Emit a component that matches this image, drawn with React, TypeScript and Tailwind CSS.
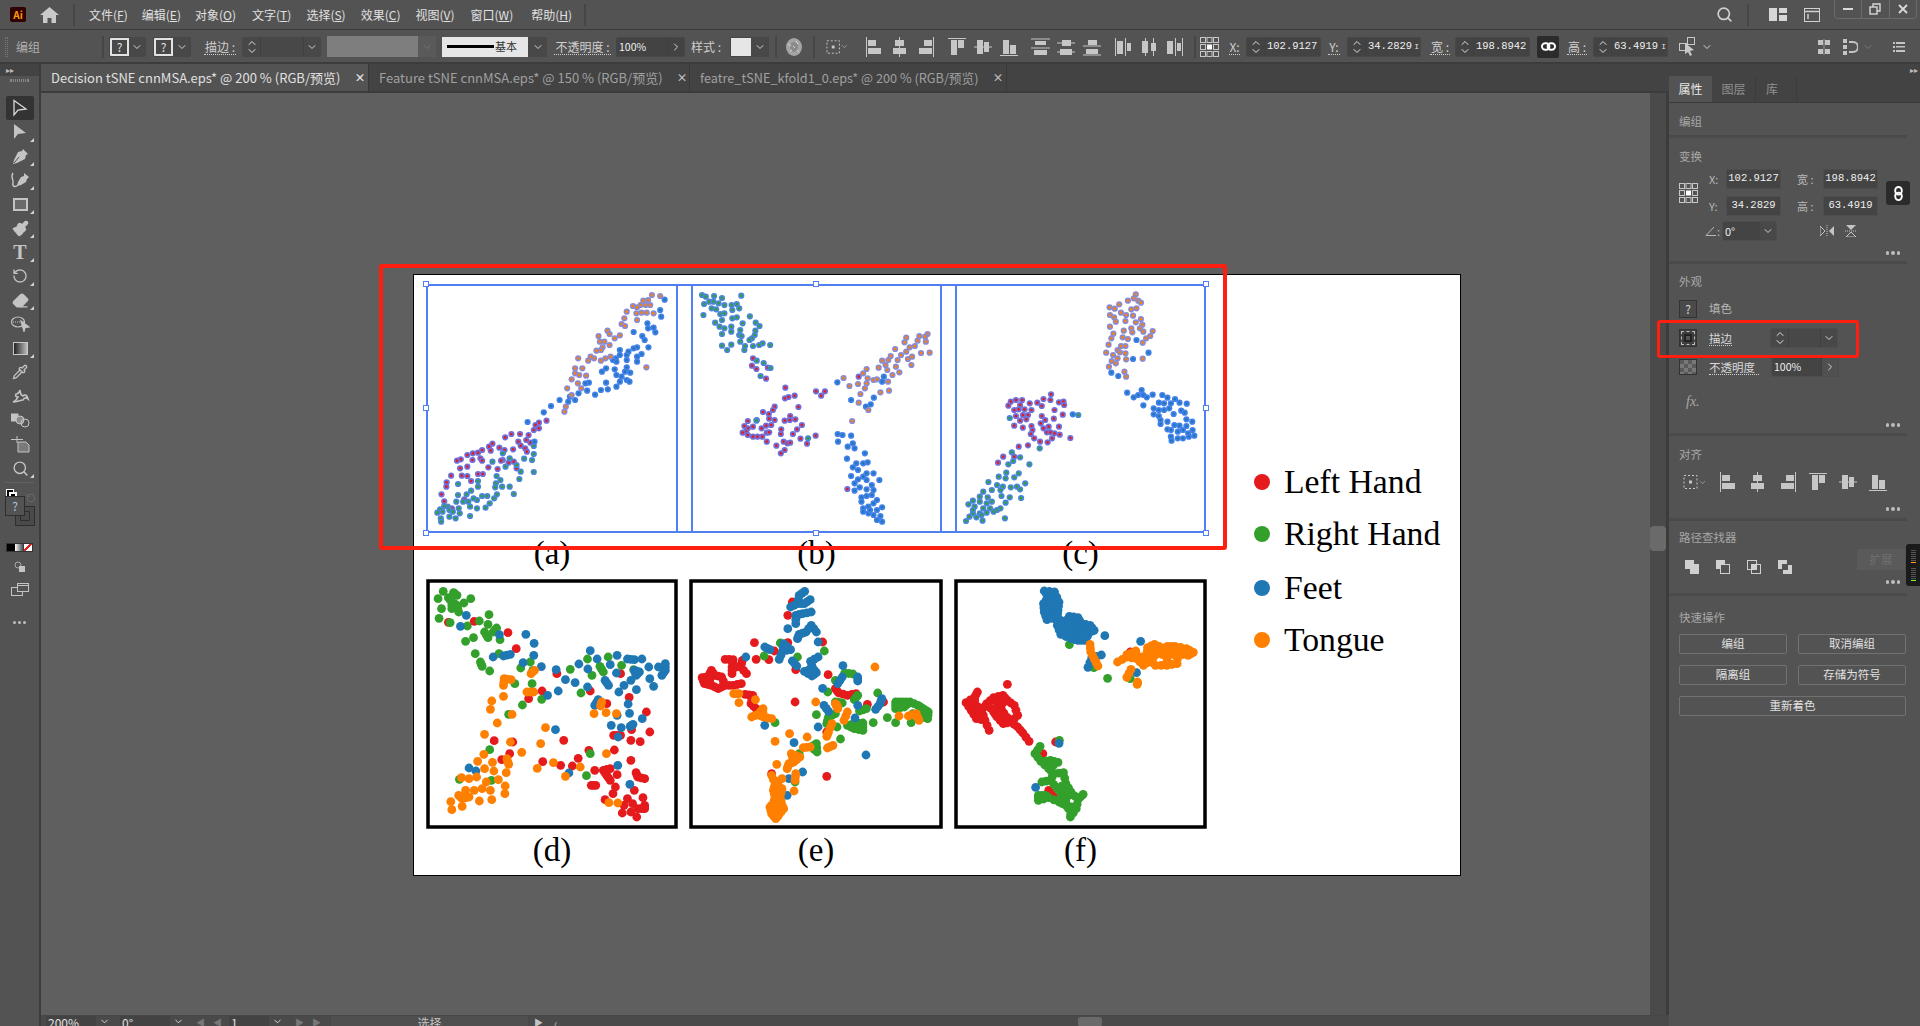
import { ChevronDown, ChevronUp, ChevronRight, Search, Paintbrush, Pipette, Eraser, RotateCcw } from "lucide-react";
import type { ReactNode } from "react";

type Pt = [number, number];
type Series = { color: string; ring: string; pts: Pt[] };

const RED = "#e41a1c";
const GREEN = "#33a02c";
const BLUE = "#1f77b4";
const ORANGE = "#ff7f00";

// the dense blobs of the lower plots: fill in between close neighbours
function densify(series: Series[], maxDist: number): Series[] {
  return series.map((s) => {
    const out: Pt[] = [...s.pts];
    s.pts.forEach((a, i) => {
      s.pts.slice(i + 1).forEach((b) => {
        if (Math.hypot(a[0] - b[0], a[1] - b[1]) < maxDist) out.push([(a[0] + b[0]) / 2, (a[1] + b[1]) / 2]);
      });
    });
    return { ...s, pts: out };
  });
}

const plotA: Series[] = [
  { color: RED, ring: "#7070d8", pts: [[427,482],[405,488],[395,495],[405,505],[390,510],[375,525],[350,522],[325,522],[307,532],[345,545],[368,540],[380,548],[352,557],[365,565],[370,575],[330,568],[305,570],[290,563],[270,551],[260,560],[265,572],[240,570],[228,578],[213,580],[197,585],[212,600],[235,595],[240,602],[178,598],[167,602],[300,600],[295,602],[317,608],[340,625],[285,627],[258,622],[197,620],[176,625],[228,642],[242,642],[181,647],[150,647],[197,648],[208,663],[137,667],[136,680],[122,703],[130,724],[188,718],[152,745],[332,605]] },
  { color: GREEN, ring: "#4a86d8", pts: [[390,558],[390,582],[385,600],[362,596],[390,636],[352,635],[348,657],[340,615],[320,595],[308,620],[300,580],[270,605],[282,648],[293,660],[280,670],[228,663],[228,680],[170,672],[278,682],[298,680],[320,680],[332,702],[283,703],[275,715],[255,708],[240,708],[225,720],[208,692],[195,703],[170,705],[165,725],[185,725],[205,740],[225,745],[250,743],[262,730],[172,745],[140,740],[130,738],[118,748],[110,758],[125,755],[145,750],[155,755],[175,760],[205,768],[163,775],[145,770],[120,775],[121,785],[200,725],[215,715]] },
  { color: BLUE, ring: "#4280ea", pts: [[770,119],[757,150],[760,170],[720,190],[738,203],[722,205],[743,217],[680,216],[705,228],[712,240],[690,262],[680,265],[665,275],[640,270],[723,262],[703,282],[690,290],[660,285],[640,285],[628,295],[620,300],[660,300],[630,305],[690,305],[600,325],[588,335],[625,328],[660,322],[655,335],[630,345],[670,338],[645,350],[660,360],[640,365],[600,368],[550,368],[540,370],[668,365],[630,380],[605,388],[585,390],[545,392],[520,400],[495,410],[510,420],[490,425],[568,404],[465,420],[440,438],[419,457],[372,486],[392,545]] },
  { color: ORANGE, ring: "#8b8bd0", pts: [[733,105],[757,108],[722,120],[708,122],[700,135],[678,138],[690,142],[715,135],[728,135],[703,158],[718,158],[688,160],[660,155],[653,175],[645,192],[655,198],[690,180],[738,160],[604,212],[610,222],[578,228],[582,245],[595,245],[625,235],[640,226],[610,255],[590,262],[572,272],[585,270],[613,290],[598,295],[585,302],[565,295],[555,290],[548,302],[519,295],[531,325],[510,325],[510,340],[522,345],[542,347],[500,358],[518,370],[487,385],[528,385],[500,405],[483,440],[479,455],[717,322]] },
];

const plotB: Series[] = [
  { color: RED, ring: "#7070d8", pts: [[1025,295],[1022,317],[1035,327],[1068,323],[1063,356],[1119,383],[1118,415],[1128,411],[1146,407],[1208,394],[1223,407],[1234,394],[1157,441],[1088,440],[1083,450],[1054,456],[1071,462],[1072,476],[1088,480],[1010,483],[1036,480],[1063,497],[1078,495],[1133,468],[1117,482],[1132,480],[1148,478],[1167,495],[1107,508],[1153,508],[1141,522],[1106,522],[1010,505],[1025,500],[1000,498],[1005,515],[1050,505],[1065,518],[1072,517],[995,518],[1010,525],[1025,530],[1038,530],[1052,530],[1065,545],[1114,545],[1125,550],[1093,557],[1133,548],[1163,536],[1182,551],[1207,527],[1117,570],[1106,580],[1299,687],[1332,350]] },
  { color: GREEN, ring: "#4a86d8", pts: [[877,105],[888,110],[912,108],[935,114],[991,107],[883,132],[898,125],[910,125],[925,130],[942,135],[963,135],[978,132],[905,145],[918,148],[985,145],[965,150],[881,165],[930,162],[942,160],[935,180],[965,175],[978,172],[915,188],[928,200],[942,205],[962,200],[995,190],[1016,169],[1033,188],[1044,198],[1032,212],[988,210],[962,215],[935,222],[985,225],[992,228],[1030,225],[1022,235],[1015,240],[988,245],[962,254],[935,257],[1053,250],[1043,255],[1075,255],[1025,258],[1000,270],[950,270],[1036,302],[1056,309],[1076,324],[1047,348],[1002,258],[1185,535],[1035,482]] },
  { color: BLUE, ring: "#4280ea", pts: [[1270,367],[1405,350],[1400,365],[1320,565],[1310,420],[1376,413],[1367,433],[1353,440],[1271,522],[1285,525],[1310,527],[1272,545],[1300,560],[1315,550],[1350,580],[1298,596],[1345,610],[1358,607],[1325,610],[1315,622],[1375,640],[1330,630],[1355,640],[1310,648],[1345,650],[1330,658],[1355,660],[1392,660],[1320,670],[1370,675],[1375,690],[1335,682],[1320,692],[1355,688],[1340,712],[1370,705],[1355,708],[1340,725],[1385,720],[1375,730],[1345,745],[1360,740],[1400,742],[1385,750],[1345,755],[1360,760],[1375,765],[1395,768],[1385,780],[1400,785],[1365,750]] },
  { color: ORANGE, ring: "#8b8bd0", pts: [[1532,222],[1508,228],[1470,233],[1525,230],[1503,242],[1465,247],[1495,258],[1480,262],[1438,267],[1538,278],[1513,279],[1487,290],[1470,275],[1455,285],[1475,297],[1445,300],[1425,288],[1418,300],[1400,302],[1410,315],[1390,323],[1440,320],[1485,315],[1450,337],[1430,345],[1415,330],[1355,327],[1345,340],[1358,355],[1375,360],[1385,358],[1288,354],[1305,378],[1330,372],[1355,370],[1350,385],[1337,402],[1395,397],[1332,428],[1360,450],[1313,483],[1420,392],[1417,365],[1527,245]] },
];

const plotC: Series[] = [
  { color: RED, ring: "#7070d8", pts: [[352,403],[330,417],[350,420],[312,428],[290,430],[375,427],[388,425],[250,420],[235,425],[268,420],[228,437],[262,435],[325,438],[390,435],[245,450],[258,448],[275,448],[295,450],[362,450],[270,465],[285,465],[250,468],[325,468],[386,464],[262,482],[280,478],[335,480],[360,476],[322,490],[245,497],[270,503],[295,498],[298,510],[375,500],[330,505],[340,517],[350,517],[362,520],[293,522],[377,524],[303,535],[355,535],[342,547],[320,545],[408,534],[285,556],[258,560],[213,590],[245,590],[198,608],[345,500]] },
  { color: GREEN, ring: "#4a86d8", pts: [[431,465],[232,474],[319,565],[238,577],[262,592],[242,603],[228,613],[289,613],[222,638],[258,640],[245,652],[220,655],[200,650],[170,666],[277,670],[253,680],[262,688],[235,682],[212,680],[195,675],[180,690],[205,690],[155,695],[145,710],[168,712],[208,708],[232,712],[265,714],[125,722],[145,725],[165,730],[180,725],[220,728],[112,733],[130,740],[155,745],[175,745],[195,750],[205,745],[125,760],[145,760],[165,758],[185,755],[115,770],[135,772],[150,765],[105,783],[153,782],[218,775],[125,750]] },
  { color: BLUE, ring: "#4280ea", pts: [[600,240],[635,278],[590,297],[527,338],[547,348],[573,398],[615,390],[592,412],[620,405],[605,405],[647,404],[630,412],[675,405],[690,413],[712,417],[725,428],[746,431],[620,436],[665,428],[680,430],[700,430],[650,445],[665,450],[680,450],[695,445],[730,452],[740,458],[650,463],[665,468],[708,462],[670,480],[690,485],[762,485],[745,498],[710,495],[725,497],[690,508],[670,492],[700,510],[720,515],[735,510],[763,510],[750,520],[768,527],[752,530],[700,530],[720,535],[735,535],[702,542],[415,463],[745,478]] },
  { color: ORANGE, ring: "#8b8bd0", pts: [[598,103],[592,115],[575,122],[605,122],[613,128],[550,133],[522,142],[537,146],[600,145],[585,148],[555,158],[523,165],[570,165],[590,167],[535,172],[613,177],[598,187],[617,194],[568,183],[540,185],[585,205],[523,200],[610,205],[647,213],[620,215],[588,217],[563,212],[533,221],[640,228],[628,235],[527,235],[575,237],[560,232],[618,248],[519,254],[555,258],[568,258],[545,270],[552,277],[512,278],[568,280],[532,285],[545,295],[570,298],[520,320],[540,310],[618,296],[565,335],[570,350],[528,303]] },
];

const plotD: Series[] = densify([
  { color: RED, ring: RED, pts: [[140,186],[215,183],[313,217],[337,265],[455,340],[640,340],[412,392],[552,392],[373,415],[665,411],[600,430],[715,455],[672,508],[725,515],[620,525],[640,525],[670,540],[697,544],[327,545],[273,541],[475,540],[318,580],[295,598],[548,570],[622,569],[517,594],[670,600],[414,604],[466,615],[500,617],[565,630],[590,630],[610,625],[600,645],[630,643],[610,660],[685,637],[710,655],[690,650],[555,675],[568,675],[625,680],[680,690],[618,700],[595,718],[660,715],[705,712],[650,735],[675,730],[710,735],[690,745],[645,758],[670,755],[687,770],[710,745]] },
  { color: GREEN, ring: GREEN, pts: [[125,93],[155,97],[110,115],[140,112],[165,105],[205,115],[185,128],[150,125],[165,135],[120,145],[150,145],[170,155],[113,174],[145,187],[195,197],[258,163],[230,182],[255,192],[280,203],[245,215],[270,215],[255,232],[290,238],[190,243],[213,232],[218,280],[287,280],[233,305],[238,318],[260,332],[378,305],[350,323],[385,330],[333,370],[383,370],[411,417],[355,434],[315,462],[525,398],[494,327],[544,296],[604,290],[580,318],[590,335],[643,315],[557,345],[678,328],[260,568],[552,580],[172,657],[265,660],[541,646]] },
  { color: BLUE, ring: BLUE, pts: [[192,165],[175,198],[288,223],[365,222],[389,249],[388,285],[270,290],[300,287],[320,282],[357,307],[410,319],[453,328],[480,358],[508,367],[459,392],[428,405],[544,380],[519,311],[552,271],[572,296],[610,313],[630,285],[545,326],[628,338],[660,296],[680,298],[702,296],[722,320],[680,330],[695,335],[750,320],[770,310],[770,330],[760,345],[725,355],[736,378],[685,345],[670,360],[650,375],[635,395],[686,388],[595,360],[605,375],[575,418],[565,435],[662,431],[630,465],[666,459],[703,475],[676,492],[613,495],[642,502],[668,498],[633,530],[451,508],[200,623],[220,632],[490,638],[632,615],[667,672]] },
  { color: ORANGE, ring: ORANGE, pts: [[302,355],[322,358],[300,375],[390,330],[380,340],[368,395],[388,395],[300,408],[266,422],[262,447],[325,462],[585,425],[582,437],[563,460],[598,457],[628,460],[282,488],[245,522],[422,502],[320,545],[408,550],[353,576],[243,582],[225,603],[268,606],[310,595],[315,612],[245,625],[272,632],[308,637],[445,607],[398,624],[523,620],[480,648],[599,580],[178,652],[200,655],[222,650],[285,658],[305,677],[250,665],[262,690],[238,685],[190,690],[215,690],[170,705],[200,710],[230,722],[266,718],[304,700],[147,724],[180,738],[150,748],[606,727],[632,728],[180,715]] },
], 21);

const plotE: Series[] = densify([
  { color: RED, ring: RED, pts: [[1140,125],[1127,165],[1228,245],[1030,247],[1127,247],[1088,272],[1035,297],[1072,298],[905,330],[878,352],[895,350],[915,345],[935,350],[968,298],[945,297],[995,300],[965,320],[1007,340],[990,320],[965,340],[885,370],[905,375],[925,385],[945,375],[968,375],[992,370],[1003,402],[1025,405],[1020,430],[1035,445],[1148,425],[1150,328],[1244,343],[1240,648],[1300,405],[1265,385],[1275,398],[1325,400],[1358,432],[1405,425],[1240,515],[1080,640]] },
  { color: GREEN, ring: GREEN, pts: [[1105,248],[1155,290],[1058,287],[1233,272],[1292,338],[1316,341],[1265,360],[1243,395],[1330,405],[1320,418],[1388,398],[1265,425],[1285,428],[1355,445],[1335,452],[1265,460],[1210,463],[1245,470],[1240,490],[1270,500],[1300,495],[1325,490],[1345,488],[1345,510],[1320,505],[1375,487],[1090,487],[1280,536],[1210,550],[1195,560],[1212,575],[1160,580],[1148,665],[1440,425],[1460,425],[1482,425],[1505,435],[1520,445],[1535,455],[1440,445],[1465,440],[1490,460],[1533,475],[1416,472],[1440,487],[1485,487],[1515,468]] },
  { color: BLUE, ring: BLUE, pts: [[1176,93],[1160,105],[1192,118],[1135,140],[1155,130],[1175,130],[1195,155],[1150,165],[1170,160],[1127,205],[1150,190],[1195,195],[1210,215],[1160,222],[1180,215],[1155,235],[1215,245],[1115,250],[1112,272],[1135,268],[1060,260],[1075,268],[1005,290],[1102,297],[1140,302],[1153,317],[1215,290],[1193,303],[1200,325],[1175,333],[1210,337],[1197,347],[1287,316],[1285,350],[1330,350],[1330,362],[1272,370],[1228,384],[1232,435],[1245,453],[1330,435],[1400,415],[1395,430],[1382,447],[1322,473],[1215,500],[1145,547],[1354,584],[1170,635],[1130,655],[1125,705],[1060,495]] },
  { color: ORANGE, ring: ORANGE, pts: [[1380,320],[970,400],[985,400],[985,427],[1033,418],[1055,445],[1040,462],[1022,470],[1055,470],[1080,475],[1208,425],[1265,430],[1272,445],[1300,455],[1255,490],[1290,480],[1245,515],[1240,528],[1132,520],[1183,530],[1090,543],[1172,562],[1192,560],[1242,563],[1258,555],[1137,580],[1162,590],[1130,610],[1095,612],[1145,605],[1125,625],[1150,640],[1148,660],[1080,645],[1110,655],[1090,670],[1085,690],[1110,685],[1145,692],[1090,710],[1105,710],[1085,730],[1110,735],[1075,740],[1095,750],[1115,745],[1080,760],[1100,765],[1092,775],[1450,467],[1477,467],[1500,460],[1508,480],[1270,435],[1100,725]] },
], 27);

const plotF: Series[] = densify([
  { color: RED, ring: RED, pts: [[582,275],[225,372],[138,395],[130,410],[185,412],[212,405],[105,427],[130,430],[165,430],[200,435],[225,420],[245,435],[120,450],[150,450],[185,455],[215,458],[255,465],[135,475],[160,480],[195,470],[172,510],[213,490],[235,485],[255,500],[270,518],[288,543],[365,545],[328,580],[345,690],[360,710],[150,465]] },
  { color: GREEN, ring: GREEN, pts: [[405,253],[476,322],[516,354],[582,355],[376,540],[320,558],[305,580],[322,603],[350,600],[372,606],[345,625],[388,637],[360,640],[350,660],[395,670],[325,665],[370,685],[395,690],[410,695],[445,702],[315,705],[345,712],[315,720],[375,725],[395,715],[430,718],[425,745],[410,755],[408,770],[385,700],[335,705],[395,735]] },
  { color: BLUE, ring: BLUE, pts: [[332,92],[362,95],[345,110],[375,125],[330,130],[350,130],[332,155],[355,150],[372,150],[340,178],[370,170],[405,168],[430,172],[370,195],[390,190],[420,190],[440,190],[465,195],[477,210],[380,222],[400,215],[420,210],[445,210],[465,215],[410,235],[430,240],[450,240],[440,225],[508,226],[612,243],[498,284],[470,292],[459,321],[600,337],[358,120],[375,549],[307,681]] },
  { color: ORANGE, ring: ORANGE, pts: [[465,252],[467,275],[478,297],[488,317],[545,305],[572,283],[598,272],[572,290],[632,262],[652,252],[690,258],[712,258],[745,265],[765,276],[600,295],[630,285],[660,280],[690,285],[720,280],[750,285],[620,315],[655,315],[688,315],[718,310],[584,327],[572,351],[603,365],[602,372],[640,300],[680,265]] },
], 34);

const SCALE_X = 2.904;
const SCALE_Y = 3;

function Scatter({ series, x0, y0, w, h, selected }: { series: Series[]; x0: number; y0: number; w: number; h: number; selected?: boolean }) {
  return (
    <svg width={w} height={h} className="block overflow-visible">
      {selected ? (
        <rect x="1" y="1" width={w - 2} height={h - 2} fill="none" stroke="#4f7ff0" strokeWidth="2" />
      ) : (
        <rect x="2" y="2" width={w - 4} height={h - 4} fill="none" stroke="#000" strokeWidth="3.5" />
      )}
      {series.map((s) =>
        s.pts.map(([px, py], i) => {
          const cx = (px - x0) / SCALE_X;
          const cy = (py - y0) / SCALE_Y;
          return selected ? (
            <g key={s.color + i}>
              <circle cx={cx} cy={cy} r="3.1" fill={s.ring} />
              <circle cx={cx} cy={cy} r="1.3" fill={s.color} />
            </g>
          ) : (
            <circle key={s.color + i} cx={cx} cy={cy} r="4.4" fill={s.color} />
          );
        }),
      )}
    </svg>
  );
}

function Chevron({ className = "" }: { className?: string }) {
  return <ChevronDown size={12} strokeWidth={2} className={"text-[#d4d4d4] " + className} />;
}

function AlignGlyph({ kind, className = "" }: { kind: string; className?: string }) {
  const c = "#c6c6c6";
  const shapes: Record<string, ReactNode> = {
    hl: <><path d="M.5 0v20" stroke={c} /><rect x="2" y="3" width="8" height="6" fill={c} /><rect x="2" y="11" width="13" height="6" fill={c} /></>,
    hc: <><path d="M6.500 0v20" stroke={c} /><rect x="2" y="3" width="9" height="6" fill={c} /><rect x="0" y="11" width="13" height="6" fill={c} /></>,
    hr: <><path d="M14.500 0v20" stroke={c} /><rect x="5" y="3" width="8" height="6" fill={c} /><rect x="0" y="11" width="13" height="6" fill={c} /></>,
    vt: <><path d="M0 1.500h18" stroke={c} /><rect x="3" y="3" width="6" height="15" fill={c} /><rect x="10" y="3" width="6" height="8" fill={c} /></>,
    vc: <><path d="M0 10h18" stroke={c} /><rect x="3" y="3" width="6" height="14" fill={c} /><rect x="10" y="5" width="5" height="10" fill={c} /></>,
    vb: <><path d="M0 18.500h18" stroke={c} /><rect x="3" y="3" width="6" height="14" fill={c} /><rect x="10" y="8" width="6" height="9" fill={c} /></>,
    dt: <><path d="M0 2h19M0 11h19" stroke={c} /><rect x="4" y="4" width="11" height="4" fill={c} /><rect x="3" y="13" width="13" height="5" fill={c} /></>,
    dm: <><path d="M0 6h18M0 15h18" stroke={c} /><rect x="5" y="3" width="9" height="6" fill={c} /><rect x="3" y="12" width="12" height="6" fill={c} /></>,
    db: <><path d="M0 9h18M0 18h18" stroke={c} /><rect x="5" y="3" width="9" height="5" fill={c} /><rect x="3" y="12" width="12" height="5" fill={c} /></>,
    sl: <><path d="M.5 1v18M10.500 1v18" stroke={c} /><rect x="2" y="4" width="6" height="13" fill={c} /><rect x="12" y="6" width="4" height="8" fill={c} /></>,
    sc: <><path d="M4.500 1v18M12.500 1v18" stroke={c} /><rect x="1" y="4" width="6" height="12" fill={c} /><rect x="10" y="6" width="5" height="8" fill={c} /></>,
    sr: <><path d="M8.500 1v18M15.500 1v18" stroke={c} /><rect x="0" y="4" width="6" height="13" fill={c} /><rect x="10" y="6" width="4" height="8" fill={c} /></>,
  };
  return (
    <svg viewBox="0 0 20 20" height="20" preserveAspectRatio="xMinYMid slice" className={"shrink-0 " + className}>
      {shapes[kind]}
    </svg>
  );
}

function RefPoint({ className = "" }: { className?: string }) {
  const cells = [0, 1, 2].flatMap((r) => [0, 1, 2].map((col) => [col, r]));
  return (
    <svg width="19" height="20" viewBox="0 0 19 20" className={"shrink-0 " + className}>
      {cells.map(([col, r]) =>
        col === 1 && r === 1 ? (
          <rect key="mid" x="7" y="7.5" width="5" height="5" fill="#fff" />
        ) : (
          <rect key={`${col}${r}`} x={0.5 + col * 6.5} y={0.5 + r * 7} width="5" height="5" fill="none" stroke="#c8c8c8" />
        ),
      )}
    </svg>
  );
}

function AlignTo({ className = "" }: { className?: string }) {
  return (
    <div className={"flex shrink-0 items-center " + className}>
      <svg width="15" height="16" viewBox="0 0 15 16">
        <rect x="1" y="1.5" width="13" height="13" fill="none" stroke="#c8c8c8" strokeDasharray="2 2" />
        <rect x="6" y="6.5" width="3" height="3" fill="#c8c8c8" />
      </svg>
      <ChevronDown size={9} strokeWidth={1.5} className="text-[#c8c8c8]" />
    </div>
  );
}

function Dots() {
  return (
    <div className="flex justify-end gap-[2px] pr-[20px]">
      <span className="h-[3.5px] w-[3.5px] rounded-full bg-[#bdbdbd]" />
      <span className="h-[3.5px] w-[3.5px] rounded-full bg-[#bdbdbd]" />
      <span className="h-[3.5px] w-[3.5px] rounded-full bg-[#bdbdbd]" />
    </div>
  );
}

function Steppers() {
  return (
    <div className="flex h-full w-[18px] shrink-0 flex-col items-center justify-center border-r border-[#3f3f3f] text-[#e0e0e0]">
      <ChevronUp size={12} strokeWidth={2} className="-mb-[2px] shrink-0" />
      <ChevronDown size={12} strokeWidth={2} className="-mt-[2px] shrink-0" />
    </div>
  );
}

function NumField({ value, className = "", cursor }: { value: string; className?: string; cursor?: boolean }) {
  return (
    <div className={"flex h-5 shrink-0 items-center rounded-[2px] border border-[#474747] bg-[#434343] " + className}>
      <Steppers />
      <span className="pl-[2px] font-['Liberation_Mono',monospace] text-[10.5px] text-[#f0f0f0]">{value}</span>
      {cursor && <span className="ml-auto pr-[1px] font-['Liberation_Mono',monospace] text-[8px] text-[#e0e0e0]">I</span>}
    </div>
  );
}

function UnderLabel({ children, className = "" }: { children: ReactNode; className?: string }) {
  return (
    <span className={"shrink-0 border-b border-dotted border-[#cfcfcf] text-center text-[12px] leading-[15px] text-[#cfcfcf] " + className}>
      {children}
    </span>
  );
}

function Sep({ className = "" }: { className?: string }) {
  return <div className={"h-[22px] w-[2px] shrink-0 bg-[#464646] " + className} />;
}

function LinkIcon({ vertical }: { vertical?: boolean }) {
  return (
    <svg width="15" height="15" viewBox="0 0 16 16" className={vertical ? "rotate-90" : ""} fill="none" stroke="#fff" strokeWidth="2">
      <rect x="1" y="4.5" width="8" height="7" rx="3.5" />
      <rect x="7" y="4.5" width="8" height="7" rx="3.5" />
    </svg>
  );
}

function QBox({ className = "" }: { className?: string }) {
  return (
    <div className={"flex h-5 shrink-0 overflow-hidden rounded-[2px] border border-[#474747] bg-[#484848] " + className}>
      <div className="flex w-[19px] items-center justify-center border-2 border-[#e2e2e2] text-[12px] text-[#e2e2e2]">?</div>
      <div className="flex flex-1 items-center justify-center"><Chevron /></div>
    </div>
  );
}

function TopBar() {
  const menus: [string, string][] = [["文件", "F"], ["编辑", "E"], ["对象", "O"], ["文字", "T"], ["选择", "S"], ["效果", "C"], ["视图", "V"], ["窗口", "W"], ["帮助", "H"]];
  const margins = ["ml-[14px]", "ml-[14px]", "ml-[14px]", "ml-[16px]", "ml-[15px]", "ml-[15px]", "ml-[15px]", "ml-[16px]", "ml-[18px]"];
  return (
    <div className="relative flex h-[30px] shrink-0 items-center border-b border-[#3c3c3c] bg-[#535353] text-[12px] text-[#e0e0e0]">
      <div className="ml-[10px] flex h-[15px] w-[16px] items-center justify-center rounded-[2px] bg-[#310000] text-[10px] font-bold text-[#ff9a00]">Ai</div>
      <svg width="19" height="16" viewBox="0 0 19 16" className="ml-[14px]">
        <path d="M9.5 0 0 8h3v8h4.5v-5h4v5H16V8h3z" fill="#c9c9c9" />
      </svg>
      <Sep className="ml-[14px]" />
      {menus.map(([label, key], i) => (
        <span key={key} className={"shrink-0 " + margins[i]}>
          {label}(<u>{key}</u>)
        </span>
      ))}
      <Sep className="ml-[12px]" />
      <Search size={17} strokeWidth={2.4} className="ml-auto text-[#cfcfcf]" />
      <Sep className="ml-[14px] bg-[#4a4a4a]" />
      <svg width="18" height="13" viewBox="0 0 18 13" className="ml-[20px]">
        <path d="M0 0h8v13H0zM10 0h8v5h-8zM10 7h8v6h-8z" fill="#d6d6d6" />
      </svg>
      <svg width="16" height="14" viewBox="0 0 16 14" className="ml-[17px]" fill="none" stroke="#d0d0d0">
        <rect x=".5" y=".5" width="15" height="13" />
        <path d="M0 3.5h16M4 6v5" strokeWidth="1.5" />
      </svg>
      <div className="ml-[14px] mr-[3px] mb-[11px] flex h-[19px] w-[83px] rounded-b-[4px] border border-t-0 border-[#6a6a6a]">
        <div className="flex flex-1 items-center justify-center border-r border-[#6a6a6a]"><span className="h-[2px] w-[10px] bg-[#d8d8d8]" /></div>
        <div className="flex flex-1 items-center justify-center border-r border-[#6a6a6a]">
          <svg width="12" height="12" viewBox="0 0 12 12" fill="none" stroke="#d8d8d8" strokeWidth="1.4"><rect x="1" y="4" width="7" height="7" /><path d="M4 4V1h7v7H8" /></svg>
        </div>
        <div className="flex flex-1 items-center justify-center">
          <svg width="10" height="10" viewBox="0 0 10 10" stroke="#d8d8d8" strokeWidth="1.8"><path d="M1 1l8 8M9 1l-8 8" /></svg>
        </div>
      </div>
    </div>
  );
}

function ControlBar() {
  return (
    <div className="flex h-[34px] shrink-0 items-center border-b-2 border-[#3c3c3c] bg-[#535353] pt-[1px] text-[12px] text-[#c8c8c8]">
      <div className="ml-[5px] h-[20px] w-[3px] shrink-0 border-x border-dotted border-[#787878]" />
      <span className="ml-[8px] w-[24px] shrink-0 text-[#b0b0b0]">编组</span>
      <Sep className="ml-[62px]" />
      <QBox className="ml-[5px] w-[37px]" />
      <QBox className="ml-[7px] w-[38px]" />
      <UnderLabel className="ml-[13px] w-[32px]">描边 :</UnderLabel>
      <div className="ml-[6px] flex h-5 w-[79px] shrink-0 items-center rounded-[2px] border border-[#474747] bg-[#484848]">
        <Steppers />
        <div className="flex-1" />
        <div className="flex h-full w-[17px] items-center justify-center border-l border-[#3f3f3f]"><Chevron /></div>
      </div>
      <div className="ml-[6px] flex h-[21px] w-[109px] shrink-0">
        <div className="w-[91px] bg-[#7e7e7e]" />
        <div className="flex flex-1 items-center justify-center bg-[#5a5a5a]"><ChevronDown size={12} className="text-[#757575]" /></div>
      </div>
      <div className="ml-[6px] flex h-5 w-[105px] shrink-0">
        <div className="flex w-[86px] items-center bg-[#e6e6e6] pl-[5px] text-[11px] text-[#333]">
          <span className="h-[3px] w-[47px] bg-black" />
          <span className="ml-[1px]">基本</span>
        </div>
        <div className="flex flex-1 items-center justify-center border border-[#474747] bg-[#484848]"><Chevron /></div>
      </div>
      <UnderLabel className="ml-[7px] w-[57px] whitespace-nowrap">不透明度 :</UnderLabel>
      <div className="ml-[5px] flex h-5 w-[69px] shrink-0 items-center rounded-[2px] border border-[#474747] bg-[#434343]">
        <span className="flex-1 pl-[2px] text-[10.5px] text-[#f0f0f0]">100%</span>
        <div className="flex h-full w-[17px] items-center justify-center border-l border-[#3f3f3f]"><ChevronRight size={12} className="text-[#d4d4d4]" /></div>
      </div>
      <span className="ml-[6px] w-[32px] shrink-0 whitespace-nowrap text-[#cfcfcf]">样式 :</span>
      <div className="ml-[7px] flex h-5 w-[39px] shrink-0 border border-[#474747] bg-[#484848]">
        <div className="w-[20px] bg-[#e6e6e6]" />
        <div className="flex flex-1 items-center justify-center"><Chevron /></div>
      </div>
      <Sep className="ml-[6px]" />
      <svg width="16" height="18" viewBox="0 0 16 18" className="ml-[9px] shrink-0">
        <ellipse cx="8" cy="9" rx="8" ry="9" fill="#a4a4a4" />
        <ellipse cx="8" cy="9" rx="4" ry="5" fill="#8a8a8a" />
        <path d="M2 6l3 2M10 3l2 3M4 13l2-1M11 12l2 2M7 8l2 2" stroke="#d8d8d8" fill="none" />
      </svg>
      <Sep className="ml-[11px]" />
      <AlignTo className="ml-[11px] w-[23px]" />
      <AlignGlyph kind="hl" className="ml-[17px] w-[15px]" />
      <AlignGlyph kind="hc" className="ml-[12px] w-[13px]" />
      <AlignGlyph kind="hr" className="ml-[13px] w-[15px]" />
      <AlignGlyph kind="vt" className="ml-[14px] w-[18px]" />
      <AlignGlyph kind="vc" className="ml-[8px] w-[18px]" />
      <AlignGlyph kind="vb" className="ml-[8px] w-[18px]" />
      <AlignGlyph kind="dt" className="ml-[13px] w-[19px]" />
      <AlignGlyph kind="dm" className="ml-[7px] w-[18px]" />
      <AlignGlyph kind="db" className="ml-[8px] w-[18px]" />
      <AlignGlyph kind="sl" className="ml-[14px] w-[16px]" />
      <AlignGlyph kind="sc" className="ml-[10px] w-[16px]" />
      <AlignGlyph kind="sr" className="ml-[10px] w-[16px]" />
      <Sep className="ml-[11px]" />
      <RefPoint className="ml-[4px]" />
      <UnderLabel className="ml-[10px] w-[11px]">X:</UnderLabel>
      <NumField value="102.9127" className="ml-[6px] w-[75px]" />
      <UnderLabel className="ml-[7px] w-[12px]">Y:</UnderLabel>
      <NumField value="34.2829" className="ml-[7px] w-[74px]" cursor />
      <UnderLabel className="ml-[9px] w-[20px] whitespace-nowrap">宽 :</UnderLabel>
      <NumField value="198.8942" className="ml-[5px] w-[75px]" />
      <div className="ml-[7px] flex h-[22px] w-[22px] shrink-0 items-center justify-center rounded-[2px] bg-[#2b2b2b]"><LinkIcon /></div>
      <UnderLabel className="ml-[8px] w-[20px] whitespace-nowrap">高 :</UnderLabel>
      <NumField value="63.4919" className="ml-[6px] w-[75px]" cursor />
      <svg width="17" height="19" viewBox="0 0 17 19" className="ml-[11px] shrink-0">
        <rect x=".5" y="6.5" width="7" height="7" fill="none" stroke="#c8c8c8" />
        <rect x="8.5" y=".5" width="7" height="7" fill="none" stroke="#c8c8c8" />
        <path d="M6 6l9 7-4 1 2 4-2 1-2-4-3 2z" fill="#c8c8c8" />
      </svg>
      <Chevron className="ml-[5px]" />
      <svg width="14" height="16" viewBox="0 0 14 16" className="ml-[104px] shrink-0">
        <path d="M7 0v16" stroke="#9a9a9a" />
        <path d="M1 1h5v5H1zM8 1h5v5H8zM1 10h5v5H1zM8 10h5v5H8z" fill="#c4c4c4" />
      </svg>
      <svg width="15" height="16" viewBox="0 0 15 16" className="ml-[12px] shrink-0">
        <path d="M0 0h4v4H0zM0 6h4v4H0zM0 12h4v4H0z" fill="#c4c4c4" />
        <path d="M6 3h4a5 5 0 0 1 0 10H6" fill="none" stroke="#c4c4c4" strokeWidth="2" />
      </svg>
      <ChevronDown size={12} className="ml-[4px] text-[#777]" />
      <svg width="12" height="11" viewBox="0 0 12 11" className="ml-[19px] shrink-0">
        <path d="M0 1h2v2H0zM3 1h9v2H3zM0 5h2v2H0zM3 5h9v1.500H3zM0 9h2v2H0zM3 9h9v2H3z" fill="#c4c4c4" />
      </svg>
    </div>
  );
}

function Corner() {
  return <span className="absolute right-[0px] bottom-[2px] h-0 w-0 border-b-[4px] border-l-[4px] border-b-[#d0d0d0] border-l-transparent" />;
}

function Tool({ children, corner = true, active }: { children: ReactNode; corner?: boolean; active?: boolean }) {
  return (
    <div className={"relative mx-[6px] flex h-[24px] w-[28px] items-center justify-center rounded-[2px] " + (active ? "bg-[#333333]" : "")}>
      {children}
      {corner && <Corner />}
    </div>
  );
}

function ToolBar() {
  const g = "#c4c4c4";
  return (
    <div className="flex w-[41px] shrink-0 flex-col border-r-2 border-[#3c3c3c] bg-[#535353]">
      <div className="flex h-[12px] items-center bg-[#434343] pl-[6px] text-[8px] leading-none text-[#bdbdbd]">▸▸</div>
      <div className="mx-[10px] mt-[3px] h-[3px] border-x border-dotted border-[#888] bg-[repeating-linear-gradient(90deg,#888_0,#888_1px,transparent_1px,transparent_2px)]" />
      <div className="mt-[14px] flex flex-col">
        <Tool corner={false} active>
          <svg width="16" height="18" viewBox="0 0 16 18" fill="none" stroke="#d8d8d8" strokeWidth="1.3"><path d="M2 1.500v14.500l4-5 8-1z" /></svg>
        </Tool>
        <Tool><svg width="14" height="16" viewBox="0 0 14 16"><path d="M1 0v15l4-5 8-1z" fill={g} /></svg></Tool>
        <Tool>
          <svg width="17" height="17" viewBox="0 0 17 17"><path d="M11 1l5 5-2 1-1 4-8 4-4 1 1-4 4-8 4-1z" fill={g} /><path d="M2 15l5-6" stroke="#535353" /></svg>
        </Tool>
        <Tool>
          <svg width="20" height="17" viewBox="0 0 20 17"><path d="M14 1l5 4-2 2-1 3-5 3-4 1 1-4 3-5 3-1z" fill={g} /><path d="M3 1c-3 4 1 7 0 10s2 5 5 2" fill="none" stroke={g} strokeWidth="1.400" /></svg>
        </Tool>
        <Tool><div className="h-[13px] w-[15px] border-2 border-[#c4c4c4] bg-[#6a6a6a]" /></Tool>
        <Tool><Paintbrush size={17} className="text-[#c4c4c4]" fill="#c4c4c4" /></Tool>
        <Tool><span className="font-['Liberation_Serif',serif] text-[20px] leading-none font-bold text-[#c4c4c4]">T</span></Tool>
        <Tool><RotateCcw size={16} strokeDasharray="3 1" className="text-[#c4c4c4]" /></Tool>
        <Tool><Eraser size={17} className="text-[#c4c4c4]" fill="#c4c4c4" /></Tool>
        <Tool corner={false}>
          <svg width="20" height="16" viewBox="0 0 20 16" fill="none" stroke={g} strokeWidth="1.200"><ellipse cx="8" cy="6" rx="6.500" ry="5" /><path d="M3 6h12" strokeDasharray="1 1" /><path d="M11 5l8 6-4 .5-1 4z" fill={g} /></svg>
        </Tool>
        <Tool><div className="h-[13px] w-[15px] border border-[#c8c8c8] bg-[linear-gradient(90deg,#222,#bbb)]" /></Tool>
        <Tool corner={false}><Pipette size={16} className="text-[#c4c4c4]" /></Tool>
        <Tool corner={false}>
          <svg width="19" height="14" viewBox="0 0 19 14" fill="none" stroke={g} strokeWidth="1.600"><path d="M2 13c3-1 4-3 5-5-2 0-3-1-2-3 2 0 3-1 4-4 0 3 1 5 3 6 2-2 4-1 5 3-2-2-4-1-5 1-3 0-6 2-10 2z" /></svg>
        </Tool>
        <Tool corner={false}>
          <svg width="19" height="15" viewBox="0 0 19 15" fill="none" stroke={g}><rect x="0" y="1" width="7" height="7" fill={g} /><circle cx="9" cy="7" r="4" fill="#8b8b8b" /><circle cx="14" cy="10" r="4" /></svg>
        </Tool>
        <Tool corner={false}>
          <svg width="19" height="17" viewBox="0 0 19 17" fill="none" stroke={g}><path d="M6 0v7M0 3.500h12" /><path d="M7 6h8l3 3v7H7z" fill="#7a7a7a" /></svg>
        </Tool>
        <Tool><Search size={17} className="text-[#c4c4c4]" /></Tool>
      </div>
      <div className="mx-[5px] mt-[2px] h-px bg-[#606060]" />
      <div className="relative mt-[3px] h-[42px]">
        <div className="absolute left-[6px] top-[3px] h-[8px] w-[8px] border border-white bg-black" />
        <div className="absolute left-[9px] top-[6px] h-[8px] w-[8px] border-2 border-white bg-black" />
        <RotateCcw size={10} className="absolute left-[26px] top-[7px] text-[#6f6f6f]" />
        <div className="absolute left-[15px] top-[20px] flex h-[20px] w-[20px] items-center justify-center border border-[#2e2e2e] bg-[#4a4a4a]">
          <div className="h-[10px] w-[10px] border border-[#2e2e2e]" />
        </div>
        <div className="absolute left-[5px] top-[10px] flex h-[20px] w-[20px] items-center justify-center border border-[#2e2e2e] bg-[#535353] text-[12px] leading-none text-[#a8c6de]">?</div>
      </div>
      <div className="mx-[6px] mt-[15px] flex h-[9px] border border-[#333]">
        <div className="flex-1 bg-black" />
        <div className="flex-1 bg-[linear-gradient(90deg,#fff,#333)]" />
        <div className="flex-1 bg-[linear-gradient(135deg,#fff_40%,#e02020_40%,#e02020_60%,#fff_60%)]" />
      </div>
      <div className="mt-[9px] flex justify-center">
        <svg width="12" height="11" viewBox="0 0 12 11"><circle cx="4" cy="4" r="3" fill="none" stroke="#aaa" /><rect x="5" y="5" width="6" height="6" fill="#c4c4c4" /></svg>
      </div>
      <div className="mt-[11px] flex justify-center">
        <svg width="18" height="13" viewBox="0 0 18 13" fill="none" stroke="#c4c4c4"><rect x=".5" y="4.500" width="11" height="8" /><rect x="6.500" y=".5" width="11" height="8" fill="#535353" /><path d="M7 2.500h10" /></svg>
      </div>
      <div className="mt-[25px] flex justify-center gap-[2px]">
        <span className="h-[3px] w-[3px] rounded-full bg-[#bdbdbd]" />
        <span className="h-[3px] w-[3px] rounded-full bg-[#bdbdbd]" />
        <span className="h-[3px] w-[3px] rounded-full bg-[#bdbdbd]" />
      </div>
    </div>
  );
}

function Tab({ title, active, className }: { title: string; active?: boolean; className: string }) {
  return (
    <div className={"flex h-full shrink-0 items-center border-r border-[#383838] pl-[10px] " + className + (active ? " bg-[#535353] text-[#e0e0e0]" : " text-[#a0a0a0]")}>
      <span className="whitespace-nowrap">{title}</span>
      <span className={"ml-[14px] text-[11px] font-bold " + (active ? "text-[#e8e8e8]" : "text-[#bbb]")}>×</span>
    </div>
  );
}

const serif = "font-['Liberation_Serif','Times_New_Roman',serif]";

function Handle({ className }: { className: string }) {
  return <span className={"absolute h-[6px] w-[6px] border border-[#4f7ff0] bg-white " + className} />;
}

function Artboard() {
  return (
    <div className="ml-[372px] mt-[181px] flex h-[602px] w-[1048px] shrink-0 border border-black bg-white text-black">
      <div className="w-[806px] shrink-0 pl-[12px] pt-[9px]">
        <div className="relative grid w-[780px] grid-cols-[252px_251px_251px] gap-x-[13px]">
          <Scatter series={plotA} x0={77} y0={72} w={252} h={249} selected />
          <Scatter series={plotB} x0={845} y0={72} w={251} h={249} selected />
          <Scatter series={plotC} x0={73} y0={72} w={251} h={249} selected />
          <span className="absolute left-0 top-0 h-[2px] w-full bg-[#4f7ff0]" />
          <span className="absolute left-0 top-[247px] h-[2px] w-full bg-[#4f7ff0]" />
          <Handle className="-left-[3px] -top-[3px]" />
          <Handle className="left-[387px] -top-[3px]" />
          <Handle className="-right-[3px] -top-[3px]" />
          <Handle className="-left-[3px] top-[121px]" />
          <Handle className="-right-[3px] top-[121px]" />
          <Handle className="-left-[3px] top-[246px]" />
          <Handle className="left-[387px] top-[246px]" />
          <Handle className="-right-[3px] top-[246px]" />
        </div>
        <div className={"grid h-[46px] w-[780px] grid-cols-[252px_251px_251px] gap-x-[13px] text-center text-[33px] leading-[40px] " + serif}>
          <span>(a)</span>
          <span>(b)</span>
          <span>(c)</span>
        </div>
        <div className="grid w-[781px] grid-cols-[252px_254px_253px] gap-x-[11px]">
          <Scatter series={plotD} x0={75} y0={56} w={252} h={250} />
          <Scatter series={plotE} x0={840} y0={56} w={254} h={250} />
          <Scatter series={plotF} x0={70} y0={56} w={253} h={250} />
        </div>
        <div className={"grid w-[781px] grid-cols-[252px_254px_253px] gap-x-[11px] text-center text-[33px] leading-[43px] " + serif}>
          <span>(d)</span>
          <span>(e)</span>
          <span>(f)</span>
        </div>
      </div>
      <div className={"ml-[34px] flex flex-col pt-[188px] text-[33.7px] leading-[38px] " + serif}>
        <LegendRow color="bg-[#e41a1c]" label="Left Hand" />
        <LegendRow color="bg-[#33a02c]" label="Right Hand" className="mt-[14px]" />
        <LegendRow color="bg-[#1f77b4]" label="Feet" className="mt-[16px]" />
        <LegendRow color="bg-[#ff7f00]" label="Tongue" className="mt-[14px]" />
      </div>
    </div>
  );
}

function LegendRow({ color, label, className = "" }: { color: string; label: string; className?: string }) {
  return (
    <div className={"flex h-[38px] items-center whitespace-nowrap " + className}>
      <span className={"h-4 w-4 rounded-full " + color} />
      <span className="ml-[14px]">{label}</span>
    </div>
  );
}

function Center() {
  return (
    <div className="relative flex min-w-0 flex-1 flex-col">
      <div className="flex h-[29px] shrink-0 border-b-2 border-[#3c3c3c] bg-[#434343]">
        <Tab active title="Decision tSNE cnnMSA.eps* @ 200 % (RGB/预览)" className="w-[328px] text-[13px]" />
        <Tab title="Feature tSNE cnnMSA.eps* @ 150 % (RGB/预览)" className="w-[321px] text-[13px]" />
        <Tab title="featre_tSNE_kfold1_0.eps* @ 200 % (RGB/预览)" className="w-[317px] text-[12.7px]" />
      </div>
      <div className="relative flex min-h-0 flex-1">
        <div className="min-w-0 flex-1 overflow-hidden bg-[#5f5f5f]">
          <Artboard />
        </div>
        <div className="flex w-[19px] shrink-0 flex-col border-r-[3px] border-[#3c3c3c] bg-[#4a4a4a] pt-[433px]">
          <div className="h-[25px] rounded-[4px] bg-[#6a6a6a]" />
        </div>
        <div className="pointer-events-none absolute left-[338px] top-[171px] h-[286px] w-[848px] rounded-[3px] border-4 border-[#ff1f10]" />
      </div>
      <div className="flex h-[11px] shrink-0 items-start overflow-hidden border-t border-[#474747] bg-[#4a4a4a] text-[12px] leading-[14px] text-[#e0e0e0]">
        <div className="ml-[5px] flex w-[74px] shrink-0"><span className="w-[50px] bg-[#434343] pl-[2px]">200%</span><ChevronDown size={11} className="ml-[3px]" /></div>
        <div className="flex w-[67px] shrink-0"><span className="w-[50px] bg-[#434343] pl-[2px]">0°</span><ChevronDown size={11} className="ml-[3px]" /></div>
        <span className="ml-[9px] w-[17px] shrink-0 text-[9px] text-[#777]">◀</span>
        <span className="w-[16px] shrink-0 text-[9px] text-[#777]">◀</span>
        <span className="w-[40px] shrink-0 bg-[#434343] pl-[2px]">1</span>
        <ChevronDown size={11} className="ml-[3px] shrink-0" />
        <span className="ml-[12px] w-[17px] shrink-0 text-[9px] text-[#777]">▶</span>
        <span className="w-[18px] shrink-0 text-[9px] text-[#777]">▶</span>
        <span className="w-[199px] shrink-0 border-x border-[#474747] bg-[#4f4f4f] text-center text-[#c4c4c4]">选择</span>
        <span className="ml-[5px] w-[14px] shrink-0 text-[9px] text-[#c4c4c4]">▶</span>
        <span className="ml-[6px] w-[500px] shrink-0 text-[#aaa]">‹</span>
        <div className="mt-[1px] ml-[24px] h-[10px] w-[24px] shrink-0 rounded-[3px] bg-[#6a6a6a]" />
      </div>
    </div>
  );
}

function PanelTitle({ children, className = "" }: { children: ReactNode; className?: string }) {
  return <div className={"h-4 pl-[10px] text-[11.5px] leading-4 text-[#a8a8a8] " + className}>{children}</div>;
}

function Divider() {
  return <div className="mr-[13px] h-[3px] shrink-0 bg-[#4a4a4a]" />;
}

function PlainField({ value, className = "" }: { value: string; className?: string }) {
  return (
    <div className={"flex h-5 shrink-0 items-center justify-center rounded-[2px] border border-[#4d4d4d] bg-[#444444] font-['Liberation_Mono',monospace] text-[10.5px] text-[#f0f0f0] " + className}>
      {value}
    </div>
  );
}

function QuickButton({ children, className = "" }: { children: ReactNode; className?: string }) {
  return (
    <div className={"flex h-5 items-center justify-center rounded-[2px] border border-[#717171] text-[11.5px] text-[#e0e0e0] " + className}>
      {children}
    </div>
  );
}

function RightPanel() {
  const ticks = [0, 1, 2, 3, 4, 5];
  return (
    <div className="relative flex w-[251px] shrink-0 flex-col bg-[#535353]">
      <div className="flex h-[12px] shrink-0 items-center justify-end bg-[#434343] pr-[2px] text-[8px] text-[#bdbdbd]">▸▸</div>
      <div className="flex h-[27px] shrink-0 border-b border-[#3c3c3c] bg-[#434343] text-[12px]">
        <div className="flex w-[43px] items-center justify-center bg-[#535353] text-[#e8e8e8]">属性</div>
        <div className="flex w-[44px] items-center justify-center border-r border-[#3c3c3c] text-[#909090]">图层</div>
        <div className="flex w-[41px] items-center justify-center border-r border-[#3c3c3c] pr-[8px] text-[#909090]">库</div>
      </div>
      <div className="h-[32px] shrink-0 pt-[10px]"><PanelTitle>编组</PanelTitle></div>
      <Divider />
      <div className="h-[123px] shrink-0 pt-[10px]">
        <PanelTitle>变换</PanelTitle>
        <div className="mt-[5px] flex pl-[10px]">
          <div className="flex w-[30px] shrink-0 items-center"><RefPoint /></div>
          <div className="flex flex-col gap-[7px]">
            <div className="flex items-center text-[11px] text-[#b8b8b8]">
              <span className="w-[17px] shrink-0">X:</span>
              <PlainField value="102.9127" className="w-[55px]" />
              <span className="ml-[16px] w-[26px] shrink-0">宽 :</span>
              <PlainField value="198.8942" className="w-[55px]" />
            </div>
            <div className="flex items-center text-[11px] text-[#b8b8b8]">
              <span className="w-[17px] shrink-0">Y:</span>
              <PlainField value="34.2829" className="w-[55px]" />
              <span className="ml-[16px] w-[26px] shrink-0">高 :</span>
              <PlainField value="63.4919" className="w-[55px]" />
            </div>
          </div>
          <div className="ml-[8px] mt-[12px] flex h-6 w-6 items-center justify-center rounded-[3px] bg-[#2b2b2b]"><LinkIcon vertical /></div>
        </div>
        <div className="mt-[5px] flex items-center pl-[36px]">
          <svg width="12" height="10" viewBox="0 0 12 10" fill="none" stroke="#b8b8b8"><path d="M11 9.500H1L9 1" /></svg>
          <span className="w-[5px] text-[11px] text-[#b8b8b8]">:</span>
          <div className="flex h-5 w-[55px] rounded-[2px] border border-[#4d4d4d] bg-[#484848]">
            <span className="w-[37px] bg-[#444444] pl-[2px] text-[11px] leading-[18px] text-[#f0f0f0]">0°</span>
            <div className="flex flex-1 items-center justify-center"><Chevron /></div>
          </div>
          <svg width="14" height="12" viewBox="0 0 14 12" className="ml-[43px]"><path d="M0 1l5 5-5 5z" fill="none" stroke="#c4c4c4" /><path d="M7 0v12" stroke="#c4c4c4" strokeDasharray="1 1" /><path d="M14 1L9 6l5 5z" fill="#c4c4c4" /></svg>
          <svg width="12" height="12" viewBox="0 0 12 12" className="ml-[11px]"><path d="M1 0l5 5 5-5z" fill="#c4c4c4" /><path d="M0 6h12" stroke="#c4c4c4" strokeDasharray="1 1" /><path d="M1 12l5-5 5 5z" fill="none" stroke="#c4c4c4" /></svg>
        </div>
        <div className="mt-[10px]"><Dots /></div>
      </div>
      <Divider />
      <div className="h-[169px] shrink-0 pt-[9px] text-[11.5px] text-[#b8b8b8]">
        <PanelTitle>外观</PanelTitle>
        <div className="mt-[11px] flex h-[18px] items-center pl-[10px]">
          <div className="flex h-[18px] w-[18px] items-center justify-center border border-[#333] bg-[#4a4a4a] text-[12px] text-[#d8d8d8]">?</div>
          <span className="ml-[12px]">填色</span>
        </div>
        <div className="mt-[10px] flex h-5 items-center pl-[10px]">
          <div className="flex h-[18px] w-[18px] items-center justify-center border border-[#333] bg-[#3f3f3f]"><div className="h-[8px] w-[8px] border-2 border-[#222] bg-[#555] outline-1 outline-offset-2 outline-dashed outline-[#bbb]" /></div>
          <span className="ml-[12px] border-b border-dotted border-[#d0d0d0] leading-[14px] text-[#d8d8d8]">描边</span>
          <div className="ml-[38px] flex h-5 w-[68px] items-center rounded-[2px] border border-[#4d4d4d] bg-[#484848]">
            <Steppers />
            <div className="flex-1" />
            <div className="flex h-full w-[17px] items-center justify-center border-l border-[#3f3f3f]"><Chevron /></div>
          </div>
        </div>
        <div className="mt-[9px] flex h-5 items-center pl-[10px]">
          <div className="h-[16px] w-[18px] border border-[#333] bg-[repeating-conic-gradient(#787878_0_25%,#5a5a5a_0_50%)] bg-[length:8px_8px]" />
          <span className="ml-[12px] w-[50px] border-b border-dotted border-[#d0d0d0] leading-[14px] text-[#d8d8d8]">不透明度</span>
          <div className="ml-[12px] flex h-5 w-[68px] items-center rounded-[2px] border border-[#4d4d4d] bg-[#444444]">
            <span className="flex-1 pl-[2px] text-[10.5px] text-[#f0f0f0]">100%</span>
            <div className="flex h-full w-[17px] items-center justify-center border-l border-[#3f3f3f] bg-[#505050]"><ChevronRight size={12} className="text-[#d4d4d4]" /></div>
          </div>
        </div>
        <div className={"mt-[17px] pl-[17px] text-[14px] italic leading-4 text-[#a8a8a8] " + serif}>fx.</div>
        <div className="mt-[13px]"><Dots /></div>
      </div>
      <Divider />
      <div className="h-[82px] shrink-0 pt-[10px]">
        <PanelTitle>对齐</PanelTitle>
        <div className="mt-[10px] flex items-center">
          <AlignTo className="ml-[14px] w-[24px]" />
          <AlignGlyph kind="hl" className="ml-[13px] w-[15px]" />
          <AlignGlyph kind="hc" className="ml-[16px] w-[13px]" />
          <AlignGlyph kind="hr" className="ml-[17px] w-[15px]" />
          <AlignGlyph kind="vt" className="ml-[13px] w-[18px]" />
          <AlignGlyph kind="vc" className="ml-[12px] w-[18px]" />
          <AlignGlyph kind="vb" className="ml-[12px] w-[18px]" />
        </div>
        <div className="mt-[15px]"><Dots /></div>
      </div>
      <Divider />
      <div className="h-[72px] shrink-0 pt-[8px]">
        <PanelTitle>路径查找器</PanelTitle>
        <div className="mt-[4px] flex h-[25px] items-end">
          <svg width="14" height="14" viewBox="0 0 14 14" className="ml-[16px]"><path d="M0 0h9v4h5v10H5V9H0z" fill="#d0d0d0" /></svg>
          <svg width="14" height="14" viewBox="0 0 14 14" className="ml-[17px]"><path d="M0 0h9v4H4v5H0z" fill="#d0d0d0" /><rect x="4.500" y="4.500" width="9" height="9" fill="none" stroke="#d0d0d0" /></svg>
          <svg width="14" height="14" viewBox="0 0 14 14" className="ml-[17px]"><rect x=".5" y=".5" width="9" height="9" fill="none" stroke="#d0d0d0" /><rect x="4.500" y="4.500" width="9" height="9" fill="none" stroke="#d0d0d0" /><rect x="4" y="4" width="6" height="6" fill="#d0d0d0" /></svg>
          <svg width="14" height="14" viewBox="0 0 14 14" className="ml-[17px]"><path d="M0 0h9v4H4v5H0zM10 5h4v9H5v-4h5z" fill="#d0d0d0" /></svg>
          <div className="ml-[65px] flex h-[21px] w-[48px] items-center justify-center self-start bg-[#5a5a5a] text-[11.5px] text-[#707070]">扩展</div>
        </div>
        <div className="mt-[6px]"><Dots /></div>
      </div>
      <Divider />
      <div className="pt-[13px]">
        <PanelTitle>快速操作</PanelTitle>
        <div className="ml-[10px] mt-[9px] grid w-[227px] grid-cols-2 gap-x-[11px] gap-y-[11px]">
          <QuickButton>编组</QuickButton>
          <QuickButton>取消编组</QuickButton>
          <QuickButton>隔离组</QuickButton>
          <QuickButton>存储为符号</QuickButton>
          <QuickButton className="col-span-2">重新着色</QuickButton>
        </div>
      </div>
      {/* performance meter on the panel edge */}
      <div className="absolute right-0 top-[480px] flex h-[42px] w-[14px] flex-col items-center justify-center gap-[5px] rounded-l-[3px] bg-[#1a1a1a]">
        <div className="flex flex-col gap-[1px]">
          {ticks.map((t) => <span key={t} className="block h-px w-[5px] bg-[#555]" />)}
          <span className="block h-px w-[5px] bg-[#ff9a1a]" />
        </div>
        <div className="flex flex-col gap-[1px]">
          {ticks.map((t) => <span key={t} className="block h-px w-[5px] bg-[#555]" />)}
          <span className="block h-px w-[5px] bg-[#7cff1a]" />
        </div>
      </div>
      {/* red annotation over the stroke row */}
      <div className="pointer-events-none absolute -left-[12px] top-[256px] h-[38px] w-[202px] rounded-[3px] border-[3.5px] border-[#ff1f10]" />
    </div>
  );
}

export default function App() {
  return (
    <div className="flex h-screen w-screen flex-col overflow-hidden bg-[#535353] font-['Noto_Sans_CJK_SC','Noto_Sans',sans-serif]">
      <TopBar />
      <ControlBar />
      <div className="flex min-h-0 flex-1">
        <ToolBar />
        <Center />
        <RightPanel />
      </div>
    </div>
  );
}
